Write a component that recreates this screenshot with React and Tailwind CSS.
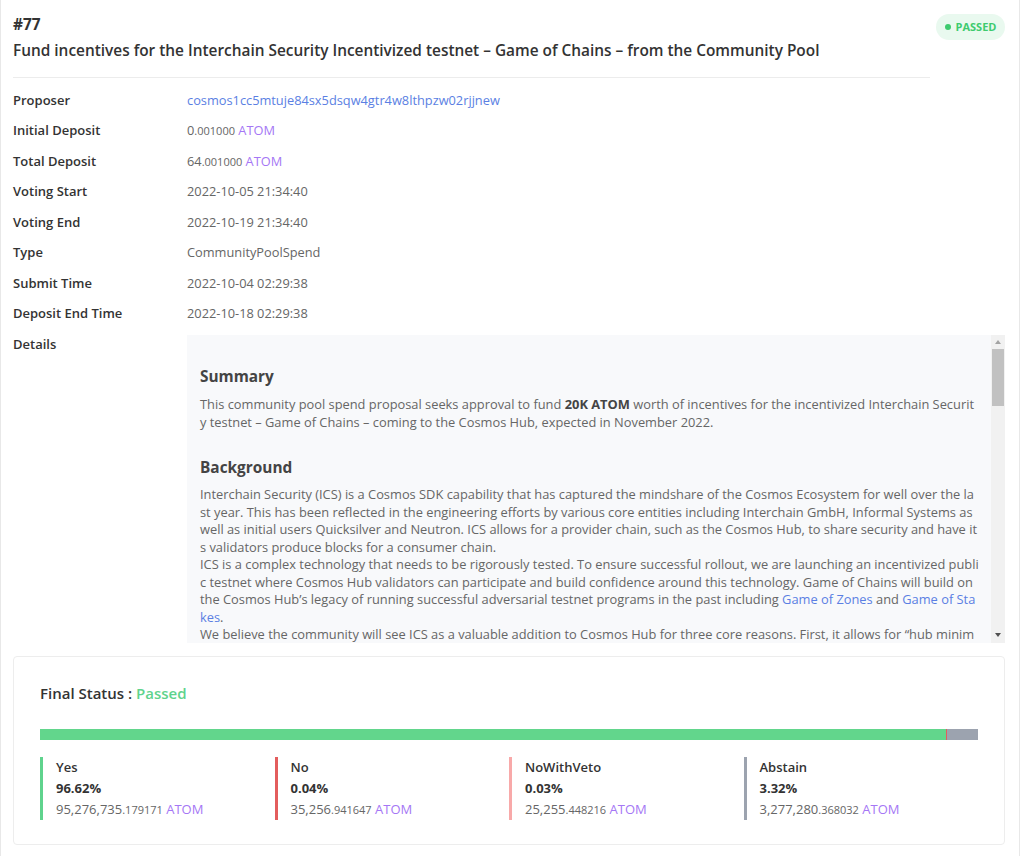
const rows = [
  { label: "Proposer", value: <a className="text-[#5b7fe3]">cosmos1cc5mtuje84sx5dsqw4gtr4w8lthpzw02rjjnew</a> },
  { label: "Initial Deposit", value: <Amount whole="0" frac=".001000" /> },
  { label: "Total Deposit", value: <Amount whole="64" frac=".001000" /> },
  { label: "Voting Start", value: "2022-10-05 21:34:40" },
  { label: "Voting End", value: "2022-10-19 21:34:40" },
  { label: "Type", value: "CommunityPoolSpend" },
  { label: "Submit Time", value: "2022-10-04 02:29:38" },
  { label: "Deposit End Time", value: "2022-10-18 02:29:38" },
];

const tally = [
  { name: "Yes", pct: "96.62%", whole: "95,276,735", frac: ".179171", color: "border-[#5fd38d]", bar: "bg-[#62d68c]", w: 96.62 },
  { name: "No", pct: "0.04%", whole: "35,256", frac: ".941647", color: "border-[#e35d5d]", bar: "bg-[#e35d5d]", w: 0.04 },
  { name: "NoWithVeto", pct: "0.03%", whole: "25,255", frac: ".448216", color: "border-[#f8a9a9]", bar: "bg-[#f8a9a9]", w: 0.03 },
  { name: "Abstain", pct: "3.32%", whole: "3,277,280", frac: ".368032", color: "border-[#9ca3af]", bar: "bg-[#9ca3af]", w: 3.31 },
];

function Amount({ whole, frac }) {
  return (
    <span>
      {whole}
      <span className="text-[11px] leading-none">{frac}</span>{" "}
      <span className="text-[#a577f5]">ATOM</span>
    </span>
  );
}

function Scrollbar() {
  return (
    <div className="flex w-[14px] shrink-0 flex-col items-center bg-[#f1f1f1]">
      <div className="mt-[5px] h-0 w-0 border-x-[3px] border-b-[4px] border-x-transparent border-b-[#a3a3a3]" />
      <div className="mt-[5px] h-[57px] w-[12px] bg-[#c1c1c1]" />
      <div className="flex-1" />
      <div className="mb-[6px] h-0 w-0 border-x-[3px] border-t-[4px] border-x-transparent border-t-[#505050]" />
    </div>
  );
}

export default function App() {
  return (
    <div className="min-h-[856px] w-[1020px] border-x border-[#e8e8e8] bg-white pl-[12px] pr-[14px] font-['Open_Sans',sans-serif] text-[13px] text-[#333]">
      {/* proposal header */}
      <div className="flex items-start">
        <div className="flex-1 border-b border-[#ececec] pb-[13px] pt-[12px]">
          <div className="text-[15.4px] font-bold leading-[26px]">#77</div>
          <h1 className="text-[15.4px] font-semibold leading-[26px]">
            Fund incentives for the Interchain Security Incentivized testnet – Game of Chains – from the Community Pool
          </h1>
        </div>
        <div className="ml-[6px] mt-[14px] flex h-[26px] w-[69px] items-center justify-center gap-[5px] rounded-full bg-[#e9f9ef] text-[11px] font-bold text-[#3ecb6f]">
          <span className="h-[6px] w-[6px] rounded-full bg-[#3ecb6f]" />
          PASSED
        </div>
      </div>

      {/* proposal fields */}
      <div className="mt-[7px] grid grid-cols-[174px_1fr] items-start">
        {rows.map((r) => (
          <div key={r.label} className="contents">
            <div className="flex h-[30.5px] items-center font-semibold">{r.label}</div>
            <div className="flex h-[30.5px] items-center text-[12.8px] text-[#666]">{r.value}</div>
          </div>
        ))}
        <div className="flex h-[30.5px] items-center font-semibold">Details</div>
        <div className="mt-[6px] flex h-[308px] bg-[#f8f9fb]">
          <div className="flex-1 overflow-hidden break-all pl-[13px] pr-[11px] pt-[31px] text-[12.85px] leading-[17.5px] text-[#666]">
            <h3 className="text-[15.4px] font-bold leading-[22px] text-[#444]">Summary</h3>
            <p className="mt-[8px]">
              This community pool spend proposal seeks approval to fund <b className="text-[#444]">20K ATOM</b> worth of incentives for the incentivized Interchain Security testnet – Game of Chains – coming to the Cosmos Hub, expected in November 2022.
            </p>
            <h3 className="mt-[26px] text-[15.4px] font-bold leading-[22px] text-[#444]">Background</h3>
            <p className="mt-[7px]">
              Interchain Security (ICS) is a Cosmos SDK capability that has captured the mindshare of the Cosmos Ecosystem for well over the last year. This has been reflected in the engineering efforts by various core entities including Interchain GmbH, Informal Systems as well as initial users Quicksilver and Neutron. ICS allows for a provider chain, such as the Cosmos Hub, to share security and have its validators produce blocks for a consumer chain.
              <br />
              ICS is a complex technology that needs to be rigorously tested. To ensure successful rollout, we are launching an incentivized public testnet where Cosmos Hub validators can participate and build confidence around this technology. Game of Chains will build on the Cosmos Hub’s legacy of running successful adversarial testnet programs in the past including <a className="text-[#5b7fe3]">Game of Zones</a> and <a className="text-[#5b7fe3]">Game of Stakes</a>.
              <br />
              We believe the community will see ICS as a valuable addition to Cosmos Hub for three core reasons. First, it allows for “hub minimalism”, keeping the Hub lean while still growing its reach and value across the interchain.
            </p>
          </div>
          <Scrollbar />
        </div>
      </div>

      {/* tally */}
      <div className="mt-[13px] rounded-[4px] border border-[#ededed] px-[26px] pb-[24px] pt-[25px]">
        <div className="text-[15px] font-semibold leading-[22px]">
          Final Status : <span className="text-[#5fd38d]">Passed</span>
        </div>
        <div className="mt-[25px] flex h-[11px] w-full">
          {tally.map((t) => (
            <div key={t.name} className={t.bar} style={{ width: `${t.w}%` }} />
          ))}
        </div>
        <div className="mt-[17px] grid grid-cols-4">
          {tally.map((t) => (
            <div key={t.name} className={`border-l-[3px] pl-[13px] leading-[21px] ${t.color}`}>
              <div className="font-semibold">{t.name}</div>
              <div className="font-bold">{t.pct}</div>
              <div className="text-[#666]">
                <Amount whole={t.whole} frac={t.frac} />
              </div>
            </div>
          ))}
        </div>
      </div>
    </div>
  );
}
